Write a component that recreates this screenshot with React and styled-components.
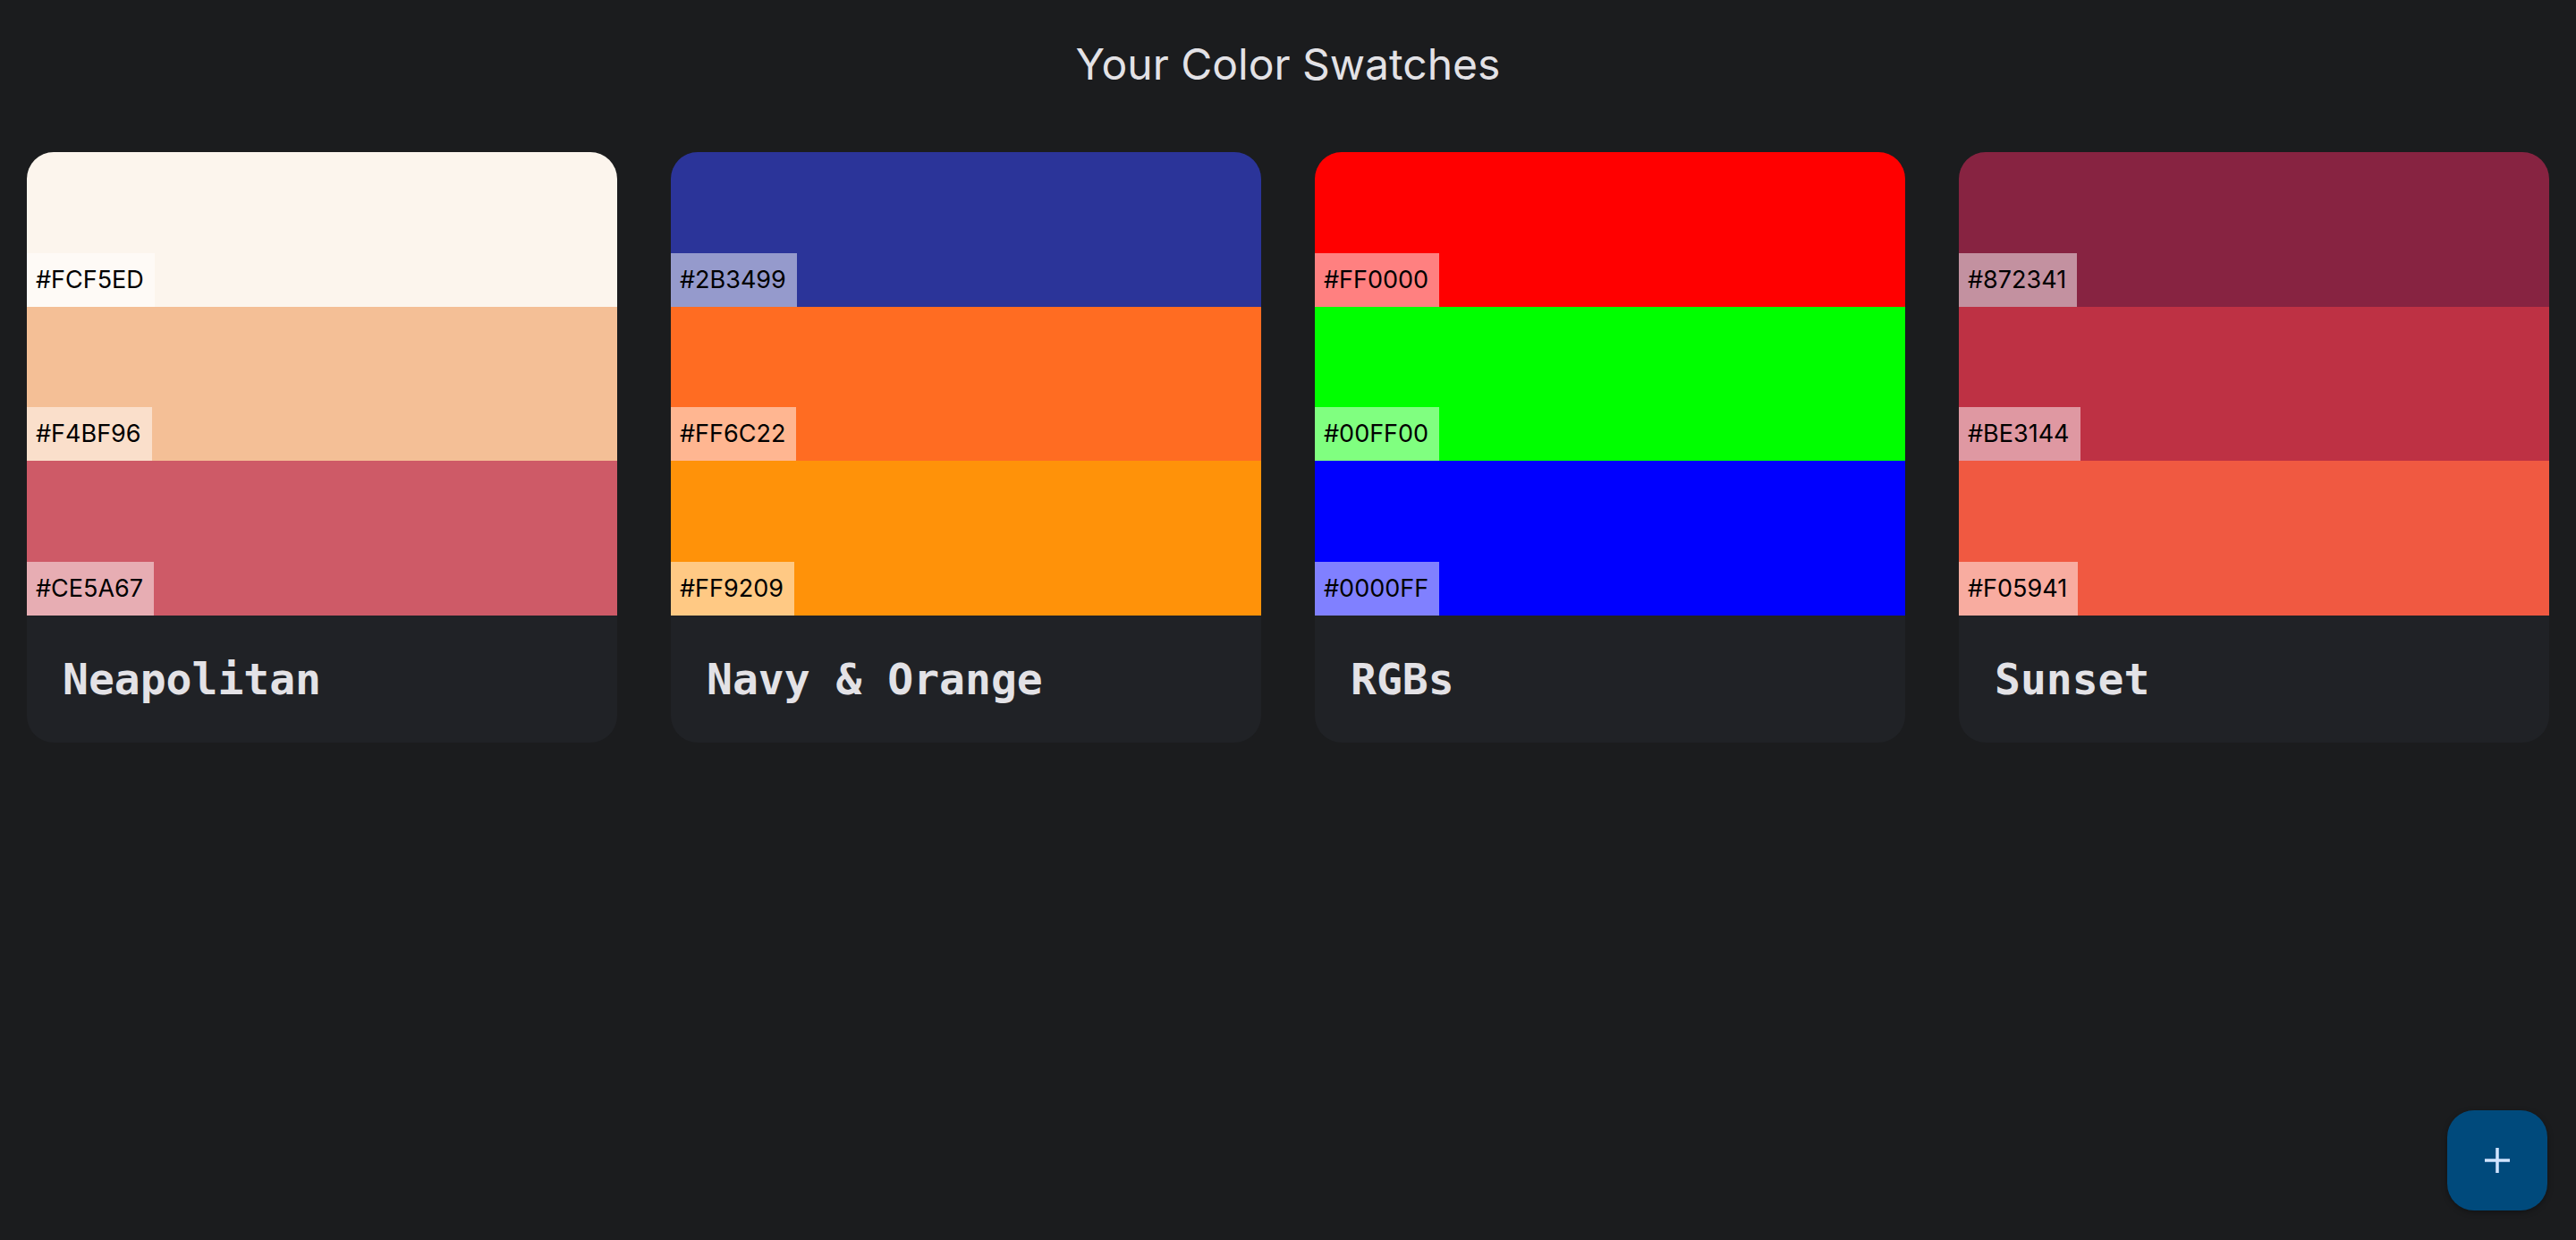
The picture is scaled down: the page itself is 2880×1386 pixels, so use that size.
import React from 'react';
import styled, { createGlobalStyle } from 'styled-components';

const GlobalStyle = createGlobalStyle`
  html, body {
    margin: 0;
    padding: 0;
    background: #1b1c1e;
  }
  body {
    font-family: 'Inter', 'Noto Sans', sans-serif;
    min-height: 1386px;
  }
`;

const Page = styled.div`
  padding: 40px 30px 0 30px;
`;

const Title = styled.h1`
  margin: 0;
  text-align: center;
  font-size: 48px;
  line-height: 64px;
  font-weight: 400;
  color: #e3e2e6;
`;

const Grid = styled.div`
  display: grid;
  grid-template-columns: repeat(4, 1fr);
  gap: 60px;
  margin-top: 66px;
`;

const Card = styled.div`
  display: flex;
  flex-direction: column;
  border-radius: 30px;
  overflow: hidden;
  background: #202226;
`;

const Bands = styled.div`
  display: flex;
  flex-direction: column;
  height: 518px;
`;

const Band = styled.div`
  flex: 1;
  display: flex;
  flex-direction: column;
  justify-content: flex-end;
  align-items: flex-start;
  background: ${(p) => p.color};
`;

const HexLabel = styled.span`
  background: rgba(255, 255, 255, 0.5);
  color: #000;
  font-size: 27px;
  line-height: 60px;
  padding: 0 12px 0 10px;
`;

const Name = styled.div`
  height: 142px;
  display: flex;
  align-items: center;
  padding: 0 40px;
  font-family: 'DejaVu Sans Mono', monospace;
  font-weight: bold;
  font-size: 48px;
  color: #e3e2e6;
`;

const Fab = styled.button`
  position: fixed;
  right: 32px;
  bottom: 33px;
  width: 112px;
  height: 112px;
  border: none;
  border-radius: 30px;
  background: #004a7c;
  display: flex;
  align-items: center;
  justify-content: center;
  box-shadow: 0 2px 6px rgba(0, 0, 0, 0.35);
  cursor: pointer;
`;

const swatches = [
  { name: 'Neapolitan', colors: ['#FCF5ED', '#F4BF96', '#CE5A67'] },
  { name: 'Navy & Orange', colors: ['#2B3499', '#FF6C22', '#FF9209'] },
  { name: 'RGBs', colors: ['#FF0000', '#00FF00', '#0000FF'] },
  { name: 'Sunset', colors: ['#872341', '#BE3144', '#F05941'] },
];

export default function App() {
  return (
    <Page>
      <GlobalStyle />
      <Title>Your Color Swatches</Title>
      <Grid>
        {swatches.map((s) => (
          <Card key={s.name}>
            <Bands>
              {s.colors.map((c) => (
                <Band key={c} color={c}>
                  <HexLabel>{c}</HexLabel>
                </Band>
              ))}
            </Bands>
            <Name>{s.name}</Name>
          </Card>
        ))}
      </Grid>
      <Fab>
        <svg width="30" height="30" viewBox="0 0 30 30">
          <path d="M15 1v28M1 15h28" stroke="#d1e4ff" strokeWidth="3.5" />
        </svg>
      </Fab>
    </Page>
  );
}
